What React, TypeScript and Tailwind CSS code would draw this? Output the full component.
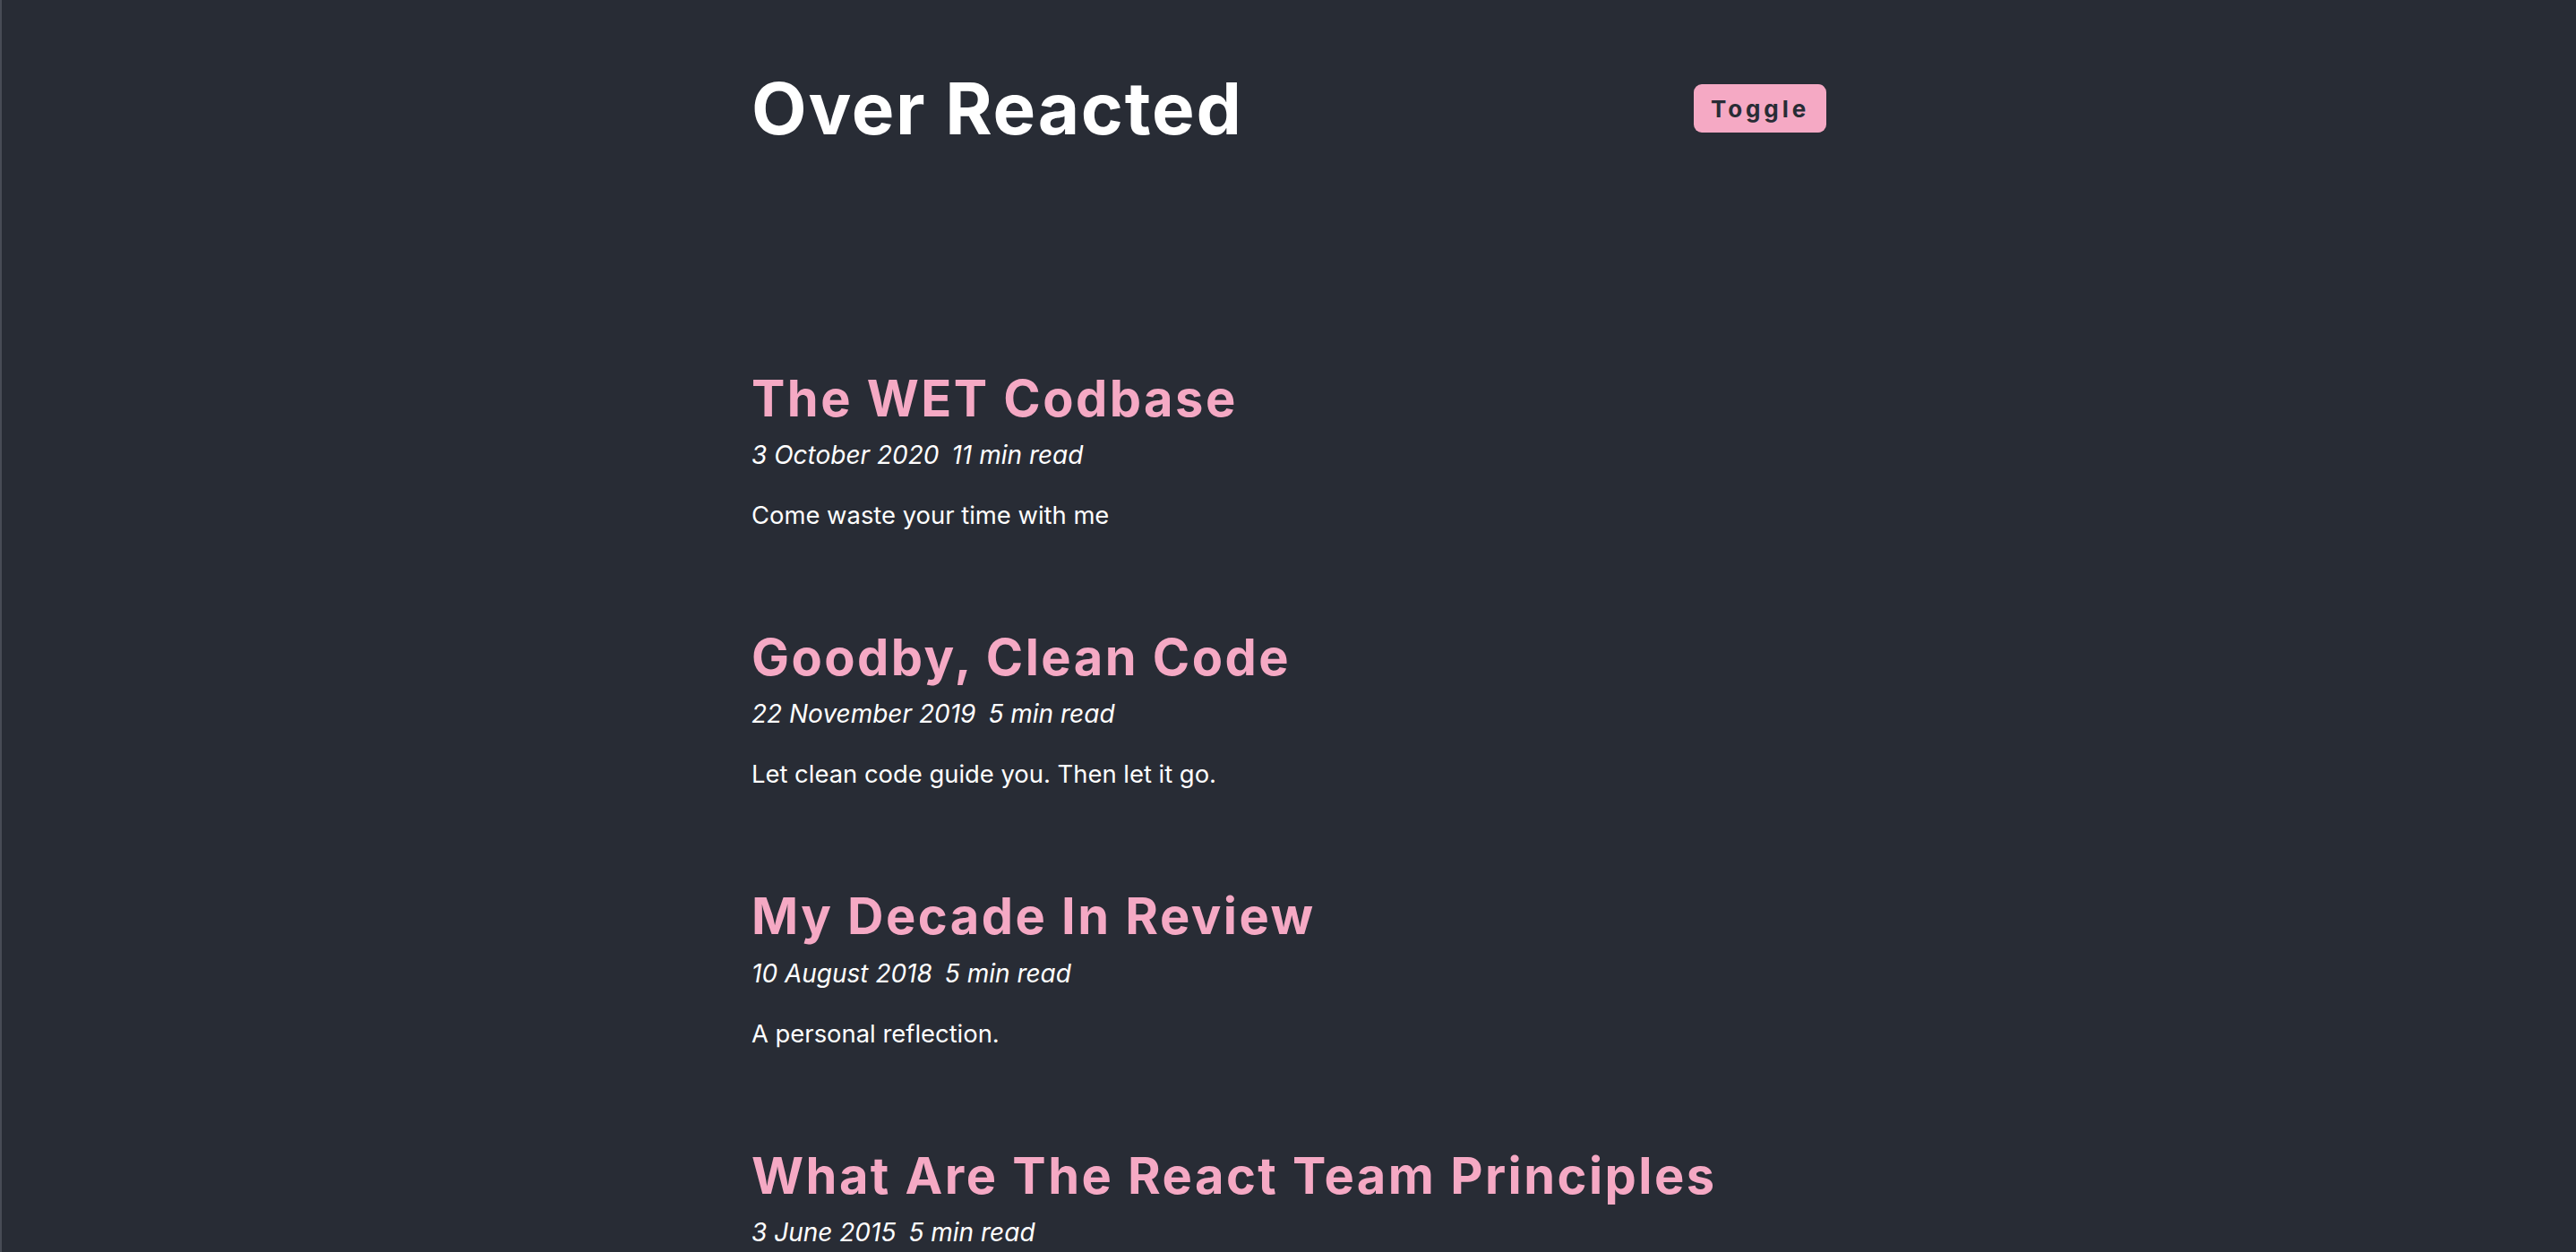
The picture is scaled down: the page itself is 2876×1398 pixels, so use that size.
const posts = [
  {
    title: "The WET Codbase",
    date: "3 October 2020",
    read: "11 min read",
    blurb: "Come waste your time with me",
  },
  {
    title: "Goodby, Clean Code",
    date: "22 November 2019",
    read: "5 min read",
    blurb: "Let clean code guide you. Then let it go.",
  },
  {
    title: "My Decade In Review",
    date: "10 August 2018",
    read: "5 min read",
    blurb: "A personal reflection.",
  },
  {
    title: "What Are The React Team Principles",
    date: "3 June 2015",
    read: "5 min read",
    blurb: "UI Before API.",
  },
];

const App = () => {
  return (
    <div
      className="min-h-screen w-full bg-[#282c35] border-l-2 border-[#474b55] text-white"
      style={{ fontFamily: "Inter, 'Noto Sans', sans-serif" }}
    >
      <div className="max-w-[1200px] mx-auto">
        <header className="flex justify-between items-center pt-[73px]">
          <h1 className="text-[80px] leading-[1.2] font-bold tracking-[0.022em]">Over Reacted</h1>
          <button className="bg-[#f5a9c4] text-[#282c35] rounded-[9px] w-[148px] h-[54px] text-[26px] font-bold tracking-[0.15em]">
            Toggle
          </button>
        </header>

        <main className="mt-[243px]">
          {posts.map((post) => (
            <article key={post.title} className="mb-[105px]">
              <h3 className="text-[56px] leading-[1.2] font-bold tracking-[0.044em] text-[#f5a9c4]">
                {post.title}
              </h3>
              <p className="mt-[8px] text-[28px] leading-[1.5] italic">
                {post.date}
                <span className="ml-[14px]">{post.read}</span>
              </p>
              <p className="mt-[25px] text-[27.4px] leading-[42px]">{post.blurb}</p>
            </article>
          ))}
        </main>
      </div>
    </div>
  );
};

export default App;
